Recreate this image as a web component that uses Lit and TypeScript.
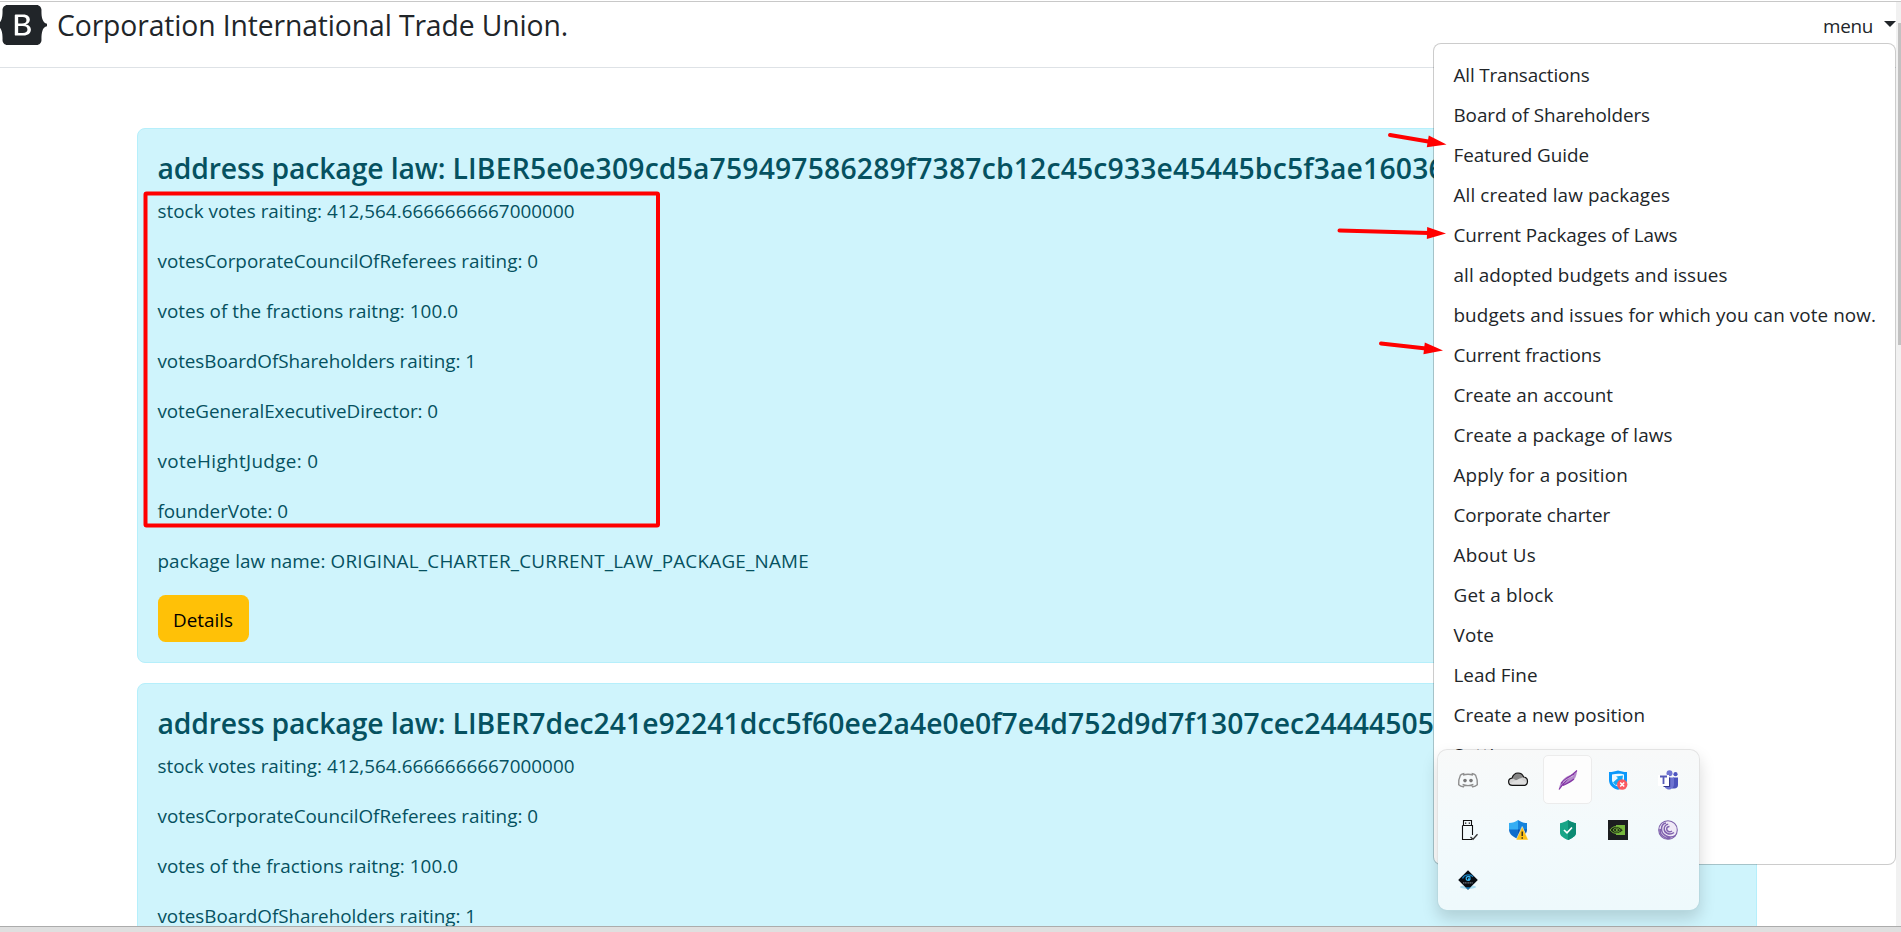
import { LitElement, html, css, svg } from "lit";
import { customElement } from "lit/decorators.js";

/** Text line and the width in px it is tracked to. */
type Line = [string, number];

const MENU: Line[] = [
  ["All Transactions", 136],
  ["Board of Shareholders", 196.5],
  ["Featured Guide", 135.5],
  ["All created law packages", 216.5],
  ["Current Packages of Laws", 224],
  ["all adopted budgets and issues", 274],
  ["budgets and issues for which you can vote now.", 422.5],
  ["Current fractions", 147.5],
  ["Create an account", 159.5],
  ["Create a package of laws", 219],
  ["Apply for a position", 174.5],
  ["Corporate charter", 156.5],
  ["About Us", 82.5],
  ["Get a block", 100],
  ["Vote", 40.5],
  ["Lead Fine", 84],
  ["Create a new position", 191.5],
  ["Settings", 73],
];

const VOTES: Line[] = [
  ["stock votes raiting: 412,564.6666666667000000", 417],
  ["votesCorporateCouncilOfReferees raiting: 0", 380.5],
  ["votes of the fractions raitng: 100.0", 300.5],
  ["votesBoardOfShareholders raiting: 1", 318.5],
  ["voteGeneralExecutiveDirector: 0", 280.5],
  ["voteHightJudge: 0", 161],
  ["founderVote: 0", 130.5],
  ["package law name: ", 173],
  ["ORIGINAL_CHARTER_CURRENT_LAW_PACKAGE_NAME", 478.5],
];

const PACKAGES: Line[] = [
  ["LIBER5e0e309cd5a759497586289f7387cb12c45c933e45445bc5f3ae1603", 976],
  ["LIBER7dec241e92241dcc5f60ee2a4e0e0f7e4d752d9d7f1307cec24444505", 981.5],
];

const fit = ([text, width]: Line) => html`<span class="fit" data-w=${width}>${text}</span>`;

const ICONS = [
  // chat controller
  svg`<path d="M6.4 3.500C4.600 3.800 3.200 4.300 2.400 5.200 1 8 .5 11.500.7 14.800c1.300 1.200 2.800 1.900 4.500 2.100l1.200-1.700M13.600 3.500c1.800.3 3.200.8 4 1.700 1.400 2.800 1.900 6.300 1.700 9.600-1.300 1.200-2.800 1.900-4.500 2.100l-1.200-1.700M5 5.200c3.200-1.200 6.800-1.200 10 0M4.600 14.500c3.500 1.500 7.300 1.500 10.800 0" fill="none" stroke="#8f8f8f" stroke-width="1.400"/><circle cx="7" cy="10.600" r="1.800" fill="#777"/><circle cx="13" cy="10.600" r="1.800" fill="#777"/>`,
  // cloud
  svg`<path d="M4.500 15.400C2 15.400.6 13.800.6 11.800c0-2 1.400-3.500 3.400-3.700C5 5 7.300 3 10 3c2.600 0 4.800 1.600 5.600 4 2.400.2 3.900 2 3.900 4.200 0 2.400-1.700 4.200-4 4.200z" fill="#d0d0d0"/><path d="M4 8.100C5 5 7.300 3 10 3c2.600 0 4.800 1.600 5.600 4l-3.600 1.500-3.500 2z" fill="#858585"/><path d="M1 13.800 12 8.500l7 4.500-1.500 2H4z" fill="#dedede"/><path d="M4.500 15.400C2 15.400.6 13.800.6 11.800c0-2 1.400-3.500 3.400-3.700C5 5 7.300 3 10 3c2.600 0 4.800 1.600 5.600 4 2.400.2 3.900 2 3.900 4.200 0 2.400-1.700 4.200-4 4.200z" fill="none" stroke="#111" stroke-width="1.200"/>`,
  // feather
  svg`<path d="M1 19.500C1.500 14 4 9.500 9 6.500c3.500-2 7.500-3 10-6-.2 4-1.200 8-4.500 10.500-3 2.300-7 2.500-10 4.700z" fill="#b48acb"/><path d="M1 19.500C5 13.500 10 8 19 .5M3 13.500C6 10 11 6 16 4.500M5 15.500c4-2 8-4 11-6.500" fill="none" stroke="#8435a5" stroke-width="1.200"/><path d="M5 12.500c3-3 7-5 10.500-7" fill="none" stroke="#dcc8e6" stroke-width=".8"/>`,
  // blue shield with a red error badge
  svg`<path d="M1 2C4.500 2 7.500.8 10 .4c2.500.4 5.500 1.600 9 1.600v8c0 5-4 8.500-9 9.700C5 18.500 1 15 1 10z" fill="#0b98fb"/><path d="M4 4.400c4-.6 8-.8 12 0v5.400c-.6 3.500-3 5.700-6 6.700-3.500-1.200-6-3.300-6-6.700z" fill="#eef9ff"/><path d="M5 12.500 10 8 8 6.500l7-1-1 6.500-1.800-2L8 15.500z" fill="#16a8f5"/><circle cx="14.200" cy="14.500" r="5.200" fill="#fa5a61"/><path d="m12.200 12.500 4 4m0-4-4 4" stroke="#fff" stroke-width="1.500"/>`,
  // meeting app
  svg`<circle cx="11.500" cy="3.300" r="3" fill="#6f74d2"/><circle cx="17.500" cy="4.200" r="2.100" fill="#4d55c1"/><path d="M15 7.500h5v7.500c0 2-1.500 3.500-3.500 3.500H14z" fill="#4b53bc"/><path d="M6 7.500h10V14c0 3-2 5.500-5 5.500S6 17 6 14z" fill="#6d73d1"/><path d="M0 5h11v11H0z" fill="#fff"/><path d="M11 7.500h1.200V17H5.500v-1H11z" fill="#33378f"/><path d="M2 6.500h7M5.500 6.500v7.500" stroke="#5459b8" stroke-width="1.800"/>`,
  // usb stick
  svg`<path d="M5.500 5.500v-5h8v5M4.500 5.500h10v9.500M14 19.500H4.500v-14" fill="none" stroke="#111" stroke-width="1.100"/><path d="M7 2.500h1.300v1.300H7zM10.700 2.500H12v1.300h-1.300z" fill="#111"/><path d="m12.500 17 2.500 2.300 4.500-5" fill="none" stroke="#333" stroke-width="1.300"/>`,
  // defender shield with a warning triangle
  svg`<path d="M1 3c3.500 0 6.500-1.200 9-3v10H1z" fill="#35aef3"/><path d="M19 3c-3.500 0-6.500-1.200-9-3v10h9z" fill="#1683dc"/><path d="M1 9.500h9V19c-5-2-9-5-9-9.500z" fill="#0f6dcb"/><path d="M10 9.500h9c0 4.500-4 7.500-9 9.500z" fill="#0a55ae"/><path d="M14.200 6.500 20.400 20H8z" fill="#fdc116" stroke="#fff" stroke-width=".5"/><path d="M14.200 11.500v4.600M14.200 17.200v1.600" stroke="#222" stroke-width="1.300"/>`,
  // green shield
  svg`<path d="M10 0c2.600 1.700 5.200 2.700 8 3.200V13c0 3-4.500 5.500-8 7-3.500-1.500-8-4-8-7V3.200C4.800 2.700 7.400 1.700 10 0z" fill="#17a587"/><path d="M10 0c2.600 1.700 5.200 2.700 8 3.200V13c0 3-4.500 5.500-8 7z" fill="#0c8b73"/><path d="m6 10 3 2.800L14 7.500" fill="none" stroke="#fff" stroke-width="1.700"/>`,
  // graphics driver
  svg`<path d="M0 0h20v20H0z" fill="#1c1e20"/><path d="M8 5h9v10H8z" fill="#76b73c"/><path d="M2 10c2.500-4 8.500-5.500 13 .3-3 4-9.500 4.500-13-.3z" fill="#1e2c14" stroke="#76b73c" stroke-width=".9"/><path d="M5 10c2-2.600 5-2.600 7.200.2-2 2.300-5 2.400-7.200-.2z" fill="none" stroke="#76b73c" stroke-width=".9"/><circle cx="8.800" cy="10" r="1" fill="#76b73c"/>`,
  // swirl
  svg`<circle cx="10" cy="10" r="9.300" fill="#efe9f6" stroke="#7f63ac" stroke-width="1.100"/><path d="M17.500 15.500c-6 4-14-.5-14-6.500 0-3 2-5.500 4.500-6M16 12.500c-4.500 3.500-9.800.5-9.800-3.500 0-2.500 1.800-4.500 4-4.700M14 11c-2.500 1.800-5.300.3-5.300-2 0-1.500 1.200-2.700 2.800-2.600M12.500 18.500C6 19 1.500 14.500 2 9" fill="none" stroke="#8062ae" stroke-width="1.500"/>`,
  // black diamond
  svg`<ellipse cx="10" cy="17" rx="8" ry="1.700" fill="#a8dcf2"/><path d="M10 .2 19.800 10 10 19.800.2 10z" fill="#090c12"/><path d="M4.500 8.500C6 4.500 13 3.500 15 7" fill="none" stroke="#1479b8" stroke-width="1.300"/><path d="M12.500 7.500c-2-2-4.600-.6-4.300 1.300.3 2 3.400 2 3.800.2H10" fill="none" stroke="#35b6f5" stroke-width="1.300"/><path d="M5 12.800h10" stroke="#707780" stroke-width="1.200" stroke-dasharray="1.200 .5"/><path d="m7.500 17.300 2.500 2.500 2.500-2.500z" fill="#1479b8"/>`,
];

@customElement("app-root")
export class AppRoot extends LitElement {
  static styles = css`
    :host {
      display: flex;
      flex-direction: column;
      position: relative;
      box-sizing: border-box;
      width: 1901px;
      height: 932px;
      overflow: hidden;
      background: #fff;
      color: #212529;
      font: 18.85px/28px "Open Sans", "Noto Sans", sans-serif;
    }
    .topline { flex: none; height: 1px; margin-top: 1px; background: #c8c8c8; }
    .window { flex: 1; min-height: 0; display: flex; }
    .page { flex: 1; min-width: 0; overflow: hidden; }
    .scroll { width: 5px; background: #f1f1f1; padding: 21px 0 0 2px; box-sizing: border-box; }
    .thumb { height: 322px; background: #c1c1c1; }
    .taskbar { flex: none; height: 5px; border-top: 1px solid #acacac; background: #dfdfdf; }
    .fit { white-space: pre; display: inline-block; }

    header { height: 65px; display: flex; align-items: flex-start; border-bottom: 1px solid #dee2e6; }
    .logo { width: 50px; height: 40px; margin: 3px 10px 0 -3px; fill: #212529; flex: none; }
    .brand { font-size: 28.3px; line-height: 45px; flex: 1; padding-top: 1px; }
    .toggle { display: flex; padding: 10px 0 0; }
    .caret { width: 0; height: 0; margin: 9px 0 0 11px; border: 6px solid transparent; border-top-color: #212529; border-bottom: 0; }

    main { padding: 60px 139px 0 137px; display: flex; flex-direction: column; gap: 20px; }
    .card { box-sizing: border-box; height: 535px; border: 1px solid #b6effb; border-radius: 8px; background: #cff4fc; color: #055160; padding: 20px 19.5px; overflow: hidden; }
    h4 { margin: 0 0 10px; font-size: 28.3px; line-height: 34px; padding-top: 2px; font-weight: 600; white-space: nowrap; }
    p { margin: 0 0 20px; padding-top: 2px; }
    button { display: block; height: 47px; width: 91px; border: 0; border-radius: 7.500px; padding: 2px 0 0; background: #ffc107; color: #000; font: inherit; }

    .menu { position: absolute; left: 1433px; top: 43px; width: 463px; height: 822px; box-sizing: border-box; border: 1px solid rgba(0, 0, 0, 0.2); border-radius: 8px; background: #fff; background-clip: padding-box; padding: 10px 19.5px; overflow: hidden; }
    .item { padding: 7px 0 5px; height: 28px; }
    .marks { position: absolute; left: 0; top: 0; pointer-events: none; }

    .tray { position: absolute; left: 1437px; top: 749px; width: 263px; height: 162px; box-sizing: border-box; border: 1px solid rgba(0, 0, 0, 0.11); border-radius: 10px; background: linear-gradient(#f8f9f9, #f3fafc 50%, #eef9fc); background-clip: padding-box; box-shadow: 0 8px 16px rgba(0, 0, 0, 0.15); padding: 5px; display: grid; grid-template-columns: repeat(5, 50px); grid-auto-rows: 50px; }
    .cell { display: flex; align-items: center; justify-content: center; box-sizing: border-box; margin: 0 1px 1px 0; border-radius: 5px; border: 1px solid transparent; }
    .cell.hot { background: #fdfdfd; border-color: #ececec; }
    .cell svg { width: 20px; height: 20px; overflow: visible; }
  `;

  /** Tracks every fitted line out to its set width. */
  updated() {
    this.renderRoot.querySelectorAll<HTMLElement>(".fit").forEach((el) => {
      el.style.letterSpacing = "0";
      const gap = Number(el.dataset.w) - el.getBoundingClientRect().width;
      el.style.letterSpacing = `${gap / (el.textContent ?? " ").length}px`;
    });
  }

  private arrow(x: number, y: number, tx: number, ty: number) {
    const len = Math.hypot(tx - x, ty - y);
    const ux = (tx - x) / len;
    const uy = (ty - y) / len;
    const bx = tx - ux * 19;
    const by = ty - uy * 19;
    return svg`<path d="M${x} ${y}L${bx + ux * 2} ${by + uy * 2}" stroke="red" stroke-width="4" stroke-linecap="round"/>
      <path d="M${tx} ${ty}L${bx - uy * 6} ${by + ux * 6}L${bx + uy * 6} ${by - ux * 6}z" fill="red"/>`;
  }

  render() {
    return html`
      <div class="topline"></div>
      <div class="window">
        <div class="page">
          <header>
            <svg class="logo" viewBox="0 0 118 94"><path fill-rule="evenodd" d="M24.509 0c-6.733 0-11.715 5.893-11.492 12.284.214 6.140-.064 14.092-2.066 20.577C8.943 39.365 5.547 43.485 0 44.014v5.972c5.547.529 8.943 4.649 10.951 11.153 2.002 6.485 2.280 14.437 2.066 20.577C12.794 88.106 17.776 94 24.510 94H93.500c6.733 0 11.714-5.893 11.491-12.284-.214-6.140.064-14.092 2.066-20.577 2.009-6.504 5.396-10.624 10.943-11.153v-5.972c-5.547-.529-8.934-4.649-10.943-11.153-2.002-6.484-2.280-14.437-2.066-20.577C105.214 5.894 100.233 0 93.500 0H24.508zM80 57.863C80 66.663 73.436 72 62.543 72H44a2 2 0 01-2-2V24a2 2 0 012-2h18.437c9.083 0 15.044 4.920 15.044 12.474 0 5.302-4.010 10.049-9.119 10.880v.277C75.317 46.394 80 51.210 80 57.863zM60.521 28.340H49.948v14.934h8.905c6.884 0 10.680-2.772 10.680-7.727 0-4.643-3.264-7.207-9.012-7.207zM49.948 49.200v16.458H60.910c7.167 0 10.964-2.876 10.964-8.281 0-5.406-3.903-8.178-11.425-8.178H49.948z"/></svg>
            <div class="brand">${fit(["Corporation International Trade Union.", 511])}</div>
            <div class="toggle">${fit(["menu", 50])}<span class="caret"></span></div>
          </header>
          <main>
            ${PACKAGES.map(
              (hash) => html`<section class="card">
                <h4>${fit(["address package law: ", 295])}${fit(hash)}6</h4>
                ${VOTES.slice(0, 7).map((v) => html`<p>${fit(v)}</p>`)}
                <p>${fit(VOTES[7])}${fit(VOTES[8])}</p>
                <button>${fit(["Details", 60])}</button>
              </section>`
            )}
          </main>
        </div>
        <div class="scroll"><div class="thumb"></div></div>
      </div>
      <div class="taskbar"></div>

      <nav class="menu">${MENU.map((m) => html`<div class="item">${fit(m)}</div>`)}</nav>

      <svg class="marks" width="1901" height="932">
        <rect x="145.500" y="193.500" width="512.500" height="332" rx="1" fill="none" stroke="red" stroke-width="4"/>
        ${this.arrow(1390, 135, 1446.500, 144.500)}
        ${this.arrow(1339.500, 230.500, 1446, 233.500)}
        ${this.arrow(1381, 343.500, 1443, 350.500)}
      </svg>

      <div class="tray">
        ${ICONS.map((icon, i) => html`<div class=${i === 2 ? "cell hot" : "cell"}><svg viewBox="0 0 20 20">${icon}</svg></div>`)}
      </div>
    `;
  }
}
